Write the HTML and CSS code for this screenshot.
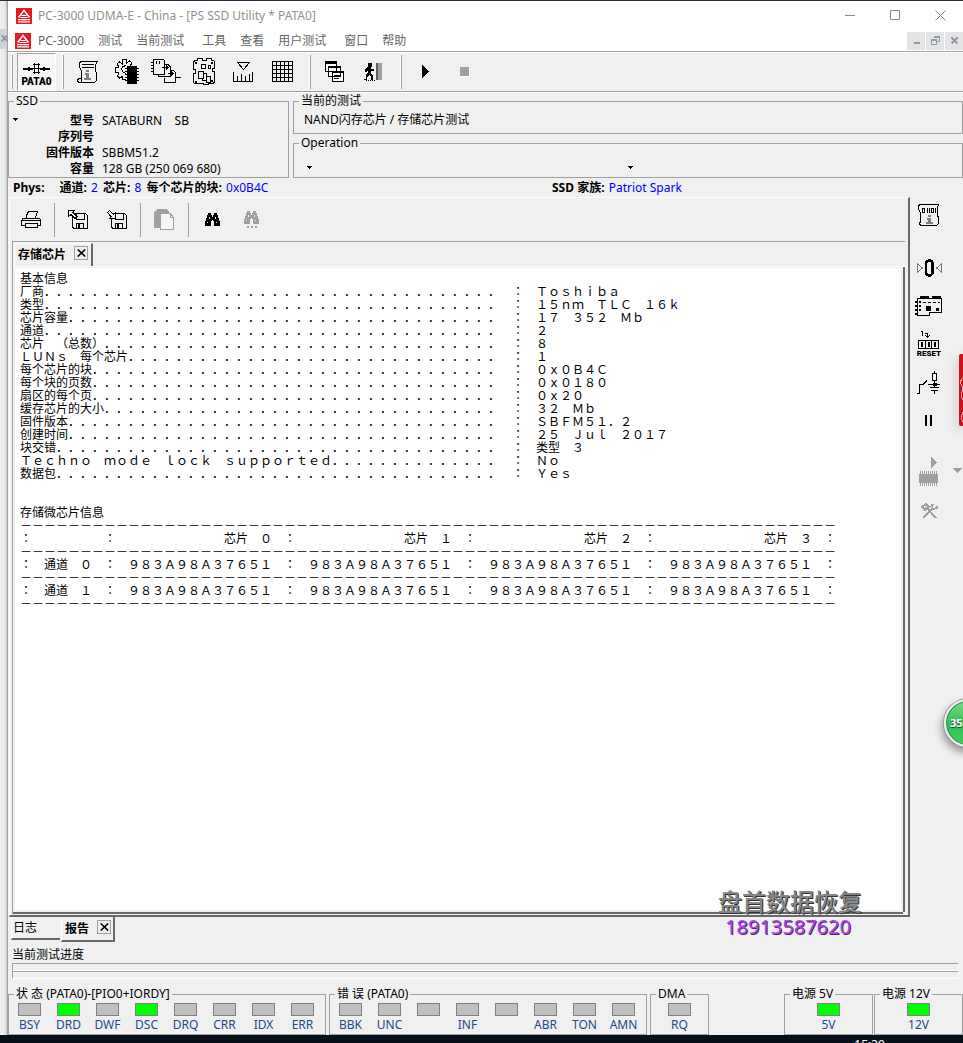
FILE: index.html
```html
<!DOCTYPE html>
<html lang="zh-CN">
<head>
<meta charset="utf-8">
<title>PC-3000 UDMA-E - China - [PS SSD Utility * PATA0]</title>
<link rel="stylesheet" href="styles.css">
</head>
<body>
<svg class="defs" aria-hidden="true">
  <symbol id="logo" viewBox="0 0 16 16">
    <path fill="#e11b22" d="M0 0h16v16H0z"/>
    <path fill="none" stroke="#fff" stroke-width="1.5" d="M2.5 9.5 8 2.5l5.5 7"/>
    <path fill="#fff" d="M6 7h4l1 1H5zM5 9h6l1 1H4zM2 11h12v1.3H2zM2 13.3h12v1.3H2z"/>
  </symbol>
  <symbol id="caret" viewBox="0 0 5 3"><path d="M0 0h5L2.500 3z"/></symbol>
  <symbol id="cross" viewBox="0 0 9 8"><path fill="none" stroke="#000" stroke-width="1.6" d="M.7.500 8.200 7.500M8.200.500.700 7.500"/></symbol>
  <symbol id="binoc" viewBox="0 0 15 13"><path d="M3 0h3v2h1v2h1V2h1V0h3v2h1v3h1v3h1v5H9V8H8v-1H7v1H6v5H0V8h1V5h1V2h1z"/><path fill="#f0f0f0" d="M4 4h1v2H4zM10 4h1v2h-1zM2 9h1v1H2zM11 9h1v1h-1z"/></symbol>
  <symbol id="disk" viewBox="0 0 16 16"><path class="ln" d="M.5.500h13l2 2v13H2l-1.500-1.500zM4.500.500v6h8v-6M4.500 15v-4.500h7V15"/><path d="M6 11h2v4H6z"/></symbol>
</svg>

<div class="screen">
  <div class="behind" aria-hidden="true"><span class="behind-tab">×</span></div>
  <main class="window">
    <header class="titlebar">
      <svg class="logo"><use href="#logo"/></svg>
      <h1>PC-3000 UDMA-E - China - [PS SSD Utility * PATA0]</h1>
      <div class="caption">
        <button aria-label="最小化"><svg width="11" height="11"><path stroke="#888" d="M0 5.500h10"/></svg></button>
        <button aria-label="最大化"><svg width="11" height="11"><path fill="none" stroke="#888" d="M.5.500h9v9h-9z"/></svg></button>
        <button aria-label="关闭"><svg width="11" height="11"><path stroke="#888" d="m.5.500 10 10m0-10-10 10"/></svg></button>
      </div>
    </header>
    <nav class="menubar">
      <svg class="logo"><use href="#logo"/></svg>
      <button>PC-3000</button><button>测试</button><button>当前测试</button><button class="spaced">工具</button><button>查看</button><button>用户测试</button><button class="spaced">窗口</button><button>帮助</button>
      <div class="mdi">
        <button aria-label="最小化窗口"><svg width="9" height="9"><path fill="#8c9cae" d="M2 6h6v2H2z"/></svg></button>
        <button aria-label="还原窗口"><svg width="9" height="9"><path fill="none" stroke="#8c9cae" d="M3 .5h5.500v4.500H6M.5 3.500h5v4.500h-5zM0 4.500h6M3 1.500h5"/></svg></button>
        <button aria-label="关闭窗口"><svg width="9" height="9"><path stroke="#8c9cae" stroke-width="2" d="m1.500 1.500 6 6m0-6-6 6"/></svg></button>
      </div>
    </nav>

    <div class="toolbar">
      <span class="sep"></span>
      <button class="port"><svg width="28" height="12"><path d="M0 6h10v2H0zM17 6h10v2H17zM8 6h11v1H8zM5 5h2v4H5zM20 5h2v4h-2z"/><path class="ln" d="M11.500 1v11M15.500 1v11M10 2.500h7M10 10.500h7"/></svg><span>PATA0</span></button>
      <span class="sep"></span>
      <button class="tool" aria-label="信息"><svg width="24" height="24"><path class="ln" d="M4.500 1.500h17l-2 3v6l1 3v7l-2 2h-16l-1-2 1-2h3v-8l-2-3v-4zM6 4.500h12M6 7.500h12M2 18.500h3v3"/><path fill="#808080" d="M10 10h3v2h-3zM9 13h4v5h2v2H8v-2h2v-3H9z"/></svg></button>
      <button class="tool" aria-label="芯片设置"><svg width="28" height="26"><path class="ln" d="M13 20.500H9.500v-3l-3 1.500-2-2 1.500-3-4-1v-4l4-1-2-3 2.500-2 3 2V.5h4V4l3-2 2.500 2-2 3M13 14.500l-3-1.500-1.500-3L10 7.500l3-1"/><path d="M14 7h10v18H14zM12 9h2v1h-2zM12 12h2v1h-2zM12 15h2v1h-2zM12 18h2v1h-2zM12 21h2v1h-2zM24 9h2v1h-2zM24 12h2v1h-2zM24 15h2v1h-2zM24 18h2v1h-2zM24 21h2v1h-2z"/></svg></button>
      <button class="tool" aria-label="芯片复制"><svg width="30" height="27"><path class="ln" d="M2.500 1.500h10l1 1v14h-11zM14 6.500h3l2 2v10H7.500v-3M19.500 12.500h3l2 2v10h-11v-5M24.500 19.500h5M11 9.500h6m-2-2 2 2-2 2M17 15.500h5m-2-2 2 2-2 2"/><path d="M0 4h2v1H0zM0 7h2v1H0zM0 10h2v1H0zM0 13h2v1H0zM5 3h1v3H5zM8 3h1v3H8z"/></svg></button>
      <button class="tool" aria-label="电路板"><svg width="23" height="28"><path class="ln" d="M1.500 2.500h3v-2h5v2h4v-2h5v2h2l1 1v7h-2v3h2v11l-2 1h-4v1h-5v-1h-9l-1-1v-9h2v-4h-2v-7zM8.500 6.500h4v4h-4zM15.500 7.500h2v3h-2zM5.500 13.500h5v7h-5zM10.500 15.500h3v7H9.500v-2M13.500 18.500h4v6h-4z"/><path d="M2 4h2v2H2zM18 4h2v2h-2zM2 23h2v2H2zM18 22h2v2h-2z"/></svg></button>
      <button class="tool" aria-label="标尺"><svg width="21" height="22"><path class="ln" d="M4.500 1.500h12l-6 7zM.5 11v9.500h19V11M4.500 15v5M8.500 13v7M12.500 15v5M16.500 13v7"/></svg></button>
      <button class="tool" aria-label="表格"><svg width="22" height="22"><path class="ln" d="M.5.500h20v20H.5zM4.500 0v21M8.500 0v21M12.500 0v21M16.500 0v21M0 4.500h21M0 8.500h21M0 12.500h21M0 16.500h21"/></svg></button>
      <span class="sep wide"></span>
      <button class="tool" aria-label="窗口列表"><svg width="20" height="21"><path fill="#fff" stroke="#000" d="M.5.500h11v10H.5zM3.500 5.500h12v10h-12zM7.500 10.500h11v10h-11z"/><path d="M0 0h12v3H0zM3 5h13v2H3zM7 10h12v2H7zM9 14h7v1H9zM9 17h5v1H9z"/></svg></button>
      <button class="tool" aria-label="退出"><svg width="20" height="20"><path d="M4 1h4v4H4zM3 5h4v2h3v2H7v3l2 2v4H7v-3l-2-2-2 2v3H0v-1h2v-4l2-3V8L2 10H1V8z"/><path fill="#a0a0a0" d="M12 1h6v17h-6z"/><path fill="#606060" d="M12 1h2v17h-2z"/><path class="ln" stroke-dasharray="1 1" d="M2 18.500h9"/></svg></button>
      <span class="sep wide"></span>
      <button class="tool" aria-label="开始"><svg width="7" height="13"><path d="M0 0 7 6.500 0 13z"/></svg></button>
      <button class="tool" aria-label="停止" disabled><svg width="10" height="10"><path fill="#fff" d="M1 1h9v9H1z"/><path fill="#a0a0a0" d="M0 0h9v9H0z"/></svg></button>
    </div>

    <section class="info">
      <fieldset class="ssd">
        <legend>SSD</legend>
        <button class="drop" aria-label="SSD 菜单"><svg width="5" height="3"><use href="#caret"/></svg></button>
        <dl>
          <dt>型号</dt><dd>SATABURN&nbsp;&nbsp;&nbsp; SB</dd>
          <dt>序列号</dt><dd></dd>
          <dt>固件版本</dt><dd>SBBM51.2</dd>
          <dt>容量</dt><dd>128 GB (250 069 680)</dd>
        </dl>
      </fieldset>
      <div class="tests">
        <fieldset class="current"><legend>当前的测试</legend><p>NAND闪存芯片 / 存储芯片测试</p></fieldset>
        <fieldset class="operation"><legend>Operation</legend>
          <div class="ops"><button class="drop" aria-label="操作一"><svg width="5" height="3"><use href="#caret"/></svg></button><button class="drop" aria-label="操作二"><svg width="5" height="3"><use href="#caret"/></svg></button></div>
        </fieldset>
      </div>
    </section>
    <div class="phys">
      <p><b class="first">Phys:</b><b>通道:</b> <i>2</i> <b>芯片:</b> <i>8</i> <b>每个芯片的块:</b> <i>0x0B4C</i></p>
      <p><b>SSD 家族:</b> <i>Patriot Spark</i></p>
    </div>

    <div class="work">
      <section class="doc">
        <div class="doctools">
          <button class="tool" aria-label="打印"><svg width="21" height="19"><path class="ln" d="M5.500 8V5.500l2-4h9l-2 6.500M.5 10.500l2-2.500h16l1 2v5h-3M4 15.500H.5v-5H19M4.500 13.500h12v4h-12z"/></svg></button>
          <span class="rule"></span>
          <button class="tool" aria-label="打开"><svg width="20" height="20"><use href="#disk" x="4" y="3" width="16" height="16"/><path fill="#f0f0f0" stroke="#000" d="M.5.500h6L5 2.500l4 4-2 2-4-4-2.500 2z"/></svg></button>
          <button class="tool" aria-label="保存"><svg width="20" height="20"><use href="#disk" x="4" y="3" width="16" height="16"/><path fill="#f0f0f0" stroke="#000" d="M8.500 8.500h-6l1.500-2-3.500-4 2-2 4 4 2-2z"/></svg></button>
          <span class="rule"></span>
          <button class="tool" aria-label="复制" disabled><svg width="22" height="23"><path fill="#a0a0a0" d="M3 1h10l2 3v16H0V4z"/><path fill="#f6f6f6" stroke="#a0a0a0" d="M6.500 5.500h10l3 4v12h-13zM16.500 5.500v4h3"/></svg></button>
          <span class="rule"></span>
          <button class="tool" aria-label="查找"><svg width="15" height="13"><use href="#binoc"/></svg></button>
          <button class="tool" aria-label="查找下一个" disabled><svg width="16" height="18" fill="#a0a0a0"><use href="#binoc" width="15" height="13"/><path d="M3 15h2v2H3zM7 15h2v2H7zM11 15h2v2h-2z"/></svg></button>
        </div>
        <div class="pages">
          <div class="tabs"><div class="tab">存储芯片<button class="close" aria-label="关闭存储芯片"><svg width="9" height="8"><use href="#cross"/></svg></button></div></div>
          <pre class="report">基本信息
厂商...................................... : Toshiba
类型...................................... : 15nm TLC 16k
芯片容量.................................... : 17 352 Mb
通道...................................... : 2
芯片 （总数）................................. : 8
LUNs 每个芯片............................... : 1
每个芯片的块.................................. : 0x0B4C
每个块的页数.................................. : 0x0180
扇区的每个页.................................. : 0x20
缓存芯片的大小................................. : 32 Mb
固件版本.................................... : SBFM51.2
创建时间.................................... : 25 Jul 2017
块交错..................................... : 类型 3
Techno mode lock supported.............. : No
数据包..................................... : Yes


存储微芯片信息
--------------------------------------------------------------------
:      :         芯片 0 :         芯片 1 :         芯片 2 :         芯片 3 :
--------------------------------------------------------------------
: 通道 0 : 983A98A37651 : 983A98A37651 : 983A98A37651 : 983A98A37651 :
--------------------------------------------------------------------
: 通道 1 : 983A98A37651 : 983A98A37651 : 983A98A37651 : 983A98A37651 :
--------------------------------------------------------------------</pre>
        </div>
      </section>
      <aside class="side">
        <button aria-label="资源信息"><svg width="22" height="23"><path class="ln" d="M2.500.500h18l-1 3v8l1 2v6l-2 2h-16l-1-2 1-2v-9l-2-3v-4zM4.500 4.500h2v4h-2zM9.500 4v5M11.500 4v5M13.500 4.500h2v4h-2zM17.500 4v5"/><path fill="#808080" d="M10 11h3v2h-3zM9 14h4v4h2v2H8v-2h2v-2H9z"/></svg></button>
        <button aria-label="归零"><svg width="25" height="18"><path fill="none" stroke="#777" d="m.5 5 5 4-5 4zM24.500 5l-5 4 5 4z"/><rect x="9" y="1.500" width="6.500" height="15" rx="3" fill="none" stroke="#000" stroke-width="2.500"/></svg></button>
        <button aria-label="控制板"><svg width="28" height="21"><path class="ln" d="M2.500 2.500h24v14h-12v3h-12z"/><path d="M5 0h9v3H5zM17 0h9v3h-9zM11 10h5v5h-5zM21 12h3v3h-3zM0 5h2v2H0zM0 9h2v2H0zM0 13h2v2H0zM0 17h2v2H0zM4 5h2v2H4zM4 9h2v2H4zM4 13h2v2H4zM8 6h3v1H8zM13 6h3v1h-3zM18 6h3v1h-3zM23 6h2v1h-2z"/></svg></button>
        <button class="reset" aria-label="RESET"><svg width="22" height="19"><path class="ln" d="M3 1.500h1.500V6M7 3.500h2.500V8M7.500 5.500l2 2 2-2M.5 10.500h20v8H.5zM7.500 10v9M13.500 10v9M3.500 12.500h1v4h-1zM10.500 12.500h1v4h-1zM16.500 12.500h1v4h-1z"/></svg><span>RESET</span></button>
        <button aria-label="开关"><svg width="24" height="24"><path class="ln" d="M17.500 0v2M15.500 2.500h4v7h-4zM17.500 10v6M11 13.500h12M13 16.500h9M14 19.500h7M17.500 20v3M0 22.500h2.500v-9H6l4-4"/><path d="M16 12h4v3h-4z"/></svg></button>
        <button aria-label="暂停"><svg width="8" height="11"><path d="M0 0h2v11H0zM5 0h2v11H5z"/></svg></button>
        <button aria-label="运行芯片" disabled><svg width="20" height="31" fill="#a0a0a0"><path d="m12 0 6 5.500-6 5.500zM0 17h19v9H0z"/><path fill="none" stroke="#a0a0a0" stroke-width="15" stroke-dasharray="1 1" d="M1 21.500h18"/></svg></button>
        <button aria-label="工具" disabled><svg width="17" height="16"><path fill="none" stroke="#a0a0a0" stroke-width="2" d="M2 15 12 5M15 15 5 4M1 4l4-3 3 3-4 3zM10 4l2-3M12 6l4-1V3"/></svg></button>
        <svg class="more" width="9" height="5"><path fill="#a0a0a0" d="M0 0h9L4.500 5z"/></svg>
        <span class="red-tag"><svg width="4" height="72"><path fill="none" stroke="#f0a0a4" d="M4 24 1 28l3 6-2 8 2 4M4 58l-2 6 2 4"/></svg></span>
        <span class="ball">35</span>
      </aside>
      <div class="watermark"><strong>盘首数据恢复</strong><span>18913587620</span></div>
    </div>

    <div class="bottom-tabs"><button class="btab">日志</button><div class="btab active">报告<button class="close" aria-label="关闭报告"><svg width="9" height="8"><use href="#cross"/></svg></button></div></div>
    <section class="progress"><p>当前测试进度</p><div class="bar"></div><div class="bar"></div></section>

    <footer class="status">
      <fieldset><legend>状 态 (PATA0)-[PIO0+IORDY]</legend><ul><li>BSY</li><li class="on">DRD</li><li>DWF</li><li class="on">DSC</li><li>DRQ</li><li>CRR</li><li>IDX</li><li>ERR</li></ul></fieldset>
      <fieldset><legend>错 误 (PATA0)</legend><ul><li>BBK</li><li>UNC</li><li></li><li>INF</li><li></li><li>ABR</li><li>TON</li><li>AMN</li></ul></fieldset>
      <fieldset class="dma"><legend>DMA</legend><ul><li>RQ</li></ul></fieldset>
      <div class="supply">
        <fieldset class="power"><legend>电源 5V</legend><ul><li class="on">5V</li></ul></fieldset>
        <fieldset class="power"><legend>电源 12V</legend><ul><li class="on">12V</li></ul></fieldset>
      </div>
    </footer>
  </main>
</div>
<div class="taskbar"><span>15:39</span></div>
</body>
</html>
```
FILE: styles.css
```css
* { box-sizing: border-box; }
body {
  margin: 0;
  min-height: 100vh;
  display: flex;
  flex-direction: column;
  border-top: 1px solid #232c40;
  background: #f0f0f0;
  color: #000;
  font: 12px/16px "Noto Sans", "Noto Sans CJK SC", sans-serif;
  overflow: hidden;
}
h1, p, dl, dd, ul, pre { margin: 0; padding: 0; }
button { font: inherit; color: inherit; background: none; border: 0; padding: 0; }
svg { display: block; shape-rendering: crispEdges; flex: none; }
.defs { width: 0; height: 0; position: absolute; }
.ln { fill: none; stroke: #000; }

.screen { flex: 1; display: flex; }
.behind {
  width: 8px;
  overflow: hidden;
  padding-top: 28px;
  background: linear-gradient(90deg, #f0f0f0 0, #e8e8e8 5px, #c4c4c4 100%);
  border-right: 1px solid #a0a0a0;
}
.behind-tab { display: block; height: 20px; background: #cdd3da; color: #8494a6; font-size: 16px; line-height: 18px; font-weight: 700; }
.window { flex: 1; min-width: 0; display: flex; flex-direction: column; }

.titlebar { height: 29px; display: flex; align-items: center; background: #fff; color: #929292; padding-left: 8px; }
.logo { width: 16px; height: 16px; shape-rendering: auto; }
.titlebar h1 { font-size: 12px; font-weight: 400; margin-left: 6px; flex: 1; }
.caption { display: flex; }
.caption button { width: 45px; display: grid; place-items: center; }
.caption svg { shape-rendering: auto; }
.menubar { height: 21px; display: flex; align-items: center; background: #fff; padding-left: 7px; color: #666; }
.menubar > button { padding: 0 7px; white-space: nowrap; }
.menubar .spaced { margin-left: 4px; }
.mdi { margin-left: auto; display: flex; gap: 1px; }
.mdi button { width: 18px; height: 18px; background: #e4e4e4; display: grid; place-items: center; }

.toolbar { height: 41px; border-top: 1px solid #a0a0a0; border-bottom: 1px solid #a0a0a0; box-shadow: inset 0 1px #fff, 0 1px #fff; display: flex; align-items: center; padding-left: 3px; }
.sep { width: 2px; height: 34px; border-left: 1px solid #fff; border-right: 1px solid #a0a0a0; margin-right: 4px; }
.sep.wide { margin-left: 7px; }
.port { width: 39px; height: 38px; border: 1px solid #a0a0a0; border-right-color: #fff; border-bottom-color: #fff; background: #f6f6f6; display: flex; flex-direction: column; align-items: center; justify-content: flex-end; gap: 2px; margin-right: 6px; padding-bottom: 2px; font: 900 10px/12px Roboto, sans-serif; }
.tool { width: 39px; display: grid; place-items: center; }

.info { display: flex; gap: 4px; padding-top: 2px; }
fieldset { min-width: 0; margin: 0; padding: 0; border: 1px solid #a0a0a0; }
legend { margin-left: 5px; padding: 0 2px; line-height: 14px; white-space: nowrap; }
.ssd { flex: 0 1 281px; height: 84px; display: flex; align-items: flex-start; padding-top: 5px; }
.drop { padding: 5px 4px; }
.ssd .drop { width: 13px; }
.ssd dl { display: grid; grid-template-columns: 72px 1fr; column-gap: 8px; grid-auto-rows: 16px; }
dt { font-weight: 700; text-align: right; }
dd { white-space: nowrap; }
.tests { flex: 1; display: flex; flex-direction: column; gap: 2px; }
.current { height: 40px; }
.current p { padding: 4px 10px; }
.operation { flex: 1; }
.ops { display: grid; grid-template-columns: 321px 1fr; padding: 11px 0 0 9px; justify-items: start; }
.phys { display: grid; grid-template-columns: 539px 1fr; height: 19px; padding-left: 5px; line-height: 19px; white-space: nowrap; }
.phys i { font-style: normal; color: #00f; }
.phys b + i { margin: 0 2px 0 1px; }
.phys .first { margin-right: 15px; }

.work { flex: 1; display: flex; position: relative; }
.doc { flex: 1; margin-left: 1px; display: flex; flex-direction: column; border: 1px solid #fff; border-right: 2px solid #696969; border-bottom: 2px solid #696969; padding: 0 3px 1px 2px; }
.doctools { height: 43px; display: flex; align-items: center; }
.rule { width: 1px; height: 34px; background: #a0a0a0; margin: 0 3px; }
.rule ~ .rule { margin: 0 4px; }
.pages { flex: 1; display: flex; flex-direction: column; border-top: 1px solid #a0a0a0; border-left: 1px solid #a0a0a0; }
.tabs { height: 25px; border-bottom: 1px solid #fff; display: flex; }
.tab { margin: 1px 0 0 1px; padding: 0 3px; border: 1px solid #fff; border-right: 2px solid #696969; border-bottom: 0; display: flex; align-items: center; gap: 8px; font-weight: 700; }
.tab .close { margin-bottom: 4px; }
.close { width: 14px; height: 14px; border: 1px solid #a0a0a0; display: grid; place-items: center; }
.close svg { shape-rendering: auto; }
.report {
  flex: 1;
  background: #fff;
  border: 2px solid #f0f0f0;
  border-top: 1px solid #f0f0f0;
  box-shadow: 2px 0 #696969, 0 2px #696969;
  margin-right: 2px;
  margin-bottom: 2px;
  padding: 3px 5px;
  font: 12px/13px "Noto Sans CJK SC", monospace;
  font-variant-east-asian: full-width;
}

.side { width: 53px; position: relative; display: flex; flex-direction: column; align-items: center; padding: 7px 15px 0 0; gap: 15px; }
.side button { display: grid; place-items: center; }
.side button:nth-child(1) { margin-bottom: 17px; }
.side button:nth-child(2) { margin-bottom: 4px; }
.side button:nth-child(6) { margin-top: 5px; }
.side button:nth-child(7) { margin-top: 16px; }
.side .reset { margin: -2px 0; }
.reset span { font: 900 8px/9px Roboto, sans-serif; }
.more { position: absolute; right: 1px; top: 271px; }
.red-tag { position: absolute; right: 0; top: 157px; width: 4px; height: 72px; background: #c8151d; border-radius: 2px 0 0 2px; box-shadow: 0 3px 12px #0005; overflow: hidden; }
.ball { position: absolute; right: -29px; top: 502px; width: 48px; height: 48px; border-radius: 50%; border: 2px solid #eee; background: linear-gradient(#7ddb86, #2fc04d 55%, #49cf62); box-shadow: inset 0 0 0 1px #278a55, 0 0 0 1px #999, -2px 5px 8px #0006; color: #fff; font: 700 11px/44px "Open Sans", sans-serif; padding-left: 4px; text-shadow: 0 1px 1px #234; }
.watermark { position: absolute; right: 101px; bottom: -21px; display: flex; flex-direction: column; align-items: center; z-index: 2; }
.watermark strong { font-size: 24px; line-height: 28px; font-weight: 500; color: #858585; text-shadow: 1px 1px #333; }
.watermark span { font-size: 20px; line-height: 22px; font-weight: 400; color: #b83cff; text-shadow: 1px 1px #333; margin-right: 4px; }

.bottom-tabs { height: 26px; display: flex; align-items: flex-start; padding-left: 3px; gap: 1px; }
.btab { width: 49px; height: 23px; text-align: left; padding-left: 1px; border-bottom: 2px solid #696969; border-left: 1px solid #fff; }
.btab.active { width: 54px; height: 25px; padding-left: 3px; border-right: 2px solid #696969; display: flex; align-items: center; gap: 8px; font-weight: 700; }
.btab.active .close { margin-bottom: 4px; }
.progress { padding: 4px 4px 0; }
.bar { height: 8px; border: 1px solid #a0a0a0; border-right-color: #fff; border-bottom-color: #fff; }
.status { display: flex; gap: 3px; padding-top: 8px; }
.status fieldset { height: 48px; padding: 0 3px 0 1px; }
.status legend { margin-left: 4px; }
.status ul { display: flex; list-style: none; margin-top: 2px; }
.status li { width: 39px; color: #1b4a86; text-align: center; line-height: 16px; }
.status li::before { content: ""; display: block; width: 21px; height: 11px; margin: 0 auto 1px; background: #c0c0c0; border: 1px solid #808080; }
.status li.on::before { background: #0f0; }
.status .dma { width: 59px; padding: 0; }
.status .dma ul, .power ul { justify-content: center; }
.supply { display: flex; gap: 1px; margin-left: auto; }
.status .power { width: 89px; padding: 0; }
.status .dma legend, .status .power legend { margin-left: 5px; }
.taskbar { height: 8px; background: #07101a; color: #fff; overflow: hidden; text-align: right; padding-right: 78px; line-height: 20px; }
```
